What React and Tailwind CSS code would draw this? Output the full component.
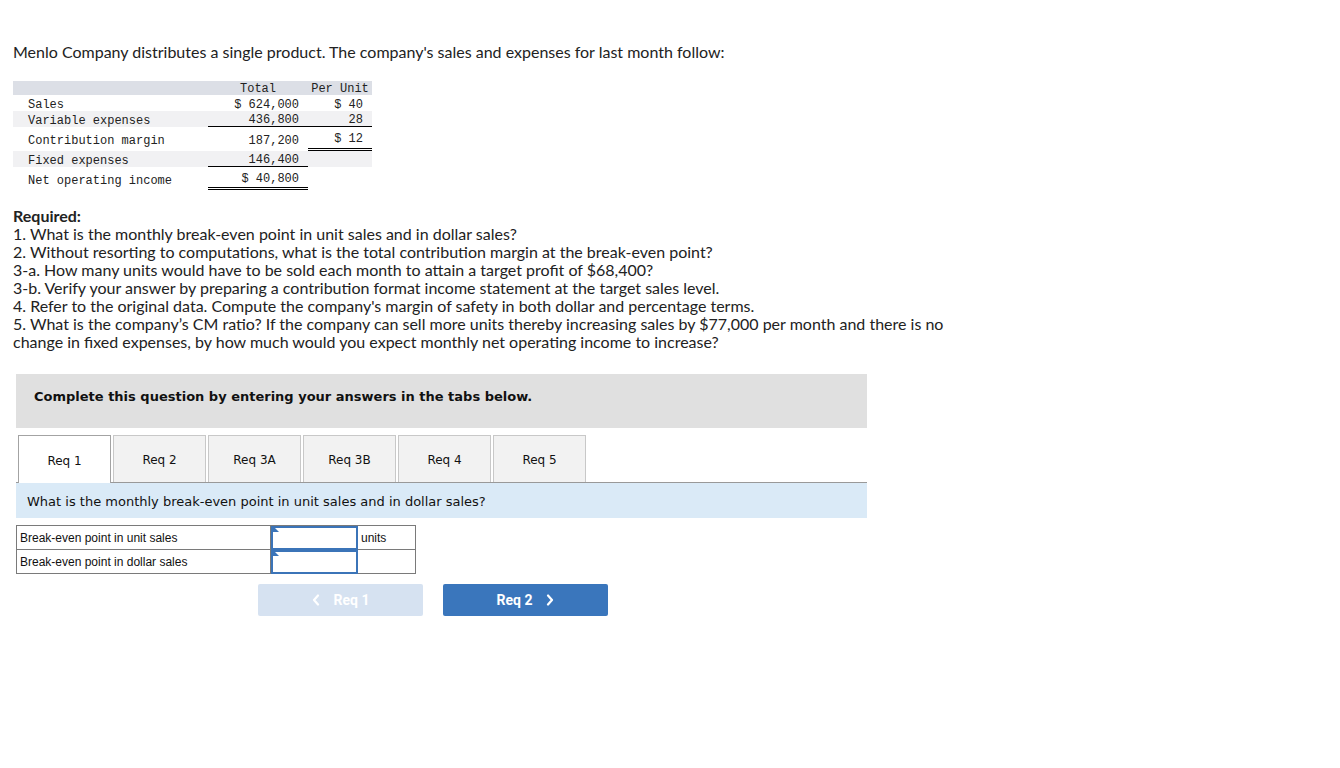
import React from "react";

const body = { fontFamily: "Lato, 'Open Sans', sans-serif" };
const mono = { fontFamily: "'Liberation Mono', 'DejaVu Sans Mono', monospace" };
const verdana = { fontFamily: "'DejaVu Sans', Verdana, sans-serif" };
const arial = { fontFamily: "'Liberation Sans', Arial, sans-serif" };

function IncomeTable() {
  return (
    <div className="w-[359px] text-[12px] text-[#222]" style={mono}>
      <div className="flex h-[14px] leading-[17px] bg-[#dcdfe6]">
        <div className="w-[195px]" />
        <div className="w-[100px] text-center">Total</div>
        <div className="w-[64px] text-center">Per Unit</div>
      </div>
      <div className="flex h-[16px] leading-[20px]">
        <div className="w-[195px] pl-[15px]">Sales</div>
        <div className="w-[100px] text-right pr-[9px]">$ 624,000</div>
        <div className="w-[64px] text-right pr-[9px]">$ 40</div>
      </div>
      <div className="flex h-[16px] leading-[20px] bg-[#f1f1f3]">
        <div className="w-[195px] pl-[15px]">Variable expenses</div>
        <div className="w-[100px] text-right pr-[9px] border-b border-black leading-[19px]">436,800</div>
        <div className="w-[64px] text-right pr-[9px] border-b border-black leading-[19px]">28</div>
      </div>
      <div className="flex h-[24px] leading-[28px]">
        <div className="w-[195px] pl-[15px]">Contribution margin</div>
        <div className="w-[100px] text-right pr-[9px]">187,200</div>
        <div className="w-[64px] text-right pr-[9px] border-b-[3px] border-double border-black leading-[25px]">$ 12</div>
      </div>
      <div className="flex h-[16px] leading-[20px] bg-[#f1f1f3]">
        <div className="w-[195px] pl-[15px]">Fixed expenses</div>
        <div className="w-[100px] text-right pr-[9px] border-b border-black leading-[19px]">146,400</div>
        <div className="w-[64px]" />
      </div>
      <div className="flex h-[23px] leading-[28px]">
        <div className="w-[195px] pl-[15px]">Net operating income</div>
        <div className="w-[100px] text-right pr-[9px] border-b-[3px] border-double border-black leading-[25px]">$ 40,800</div>
        <div className="w-[64px]" />
      </div>
    </div>
  );
}

function Chevron({ dir }) {
  return (
    <svg width="8" height="12" viewBox="0 0 8 12" fill="none">
      <path
        d={dir === "left" ? "M6 1.5 L2 6 L6 10.5" : "M2 1.5 L6 6 L2 10.5"}
        stroke="white"
        strokeWidth="2.2"
        strokeLinecap="round"
        strokeLinejoin="round"
      />
    </svg>
  );
}

function InputCell() {
  return (
    <div className="relative w-[87px] h-[24px] border-2 border-[#3b74b8] bg-white">
      <div className="absolute left-0 top-0 w-0 h-0 border-t-[6px] border-t-transparent border-l-[6px] border-l-[#3b74b8] -translate-y-[2px]" />
    </div>
  );
}

export default function App() {
  const tabs = ["Req 1", "Req 2", "Req 3A", "Req 3B", "Req 4", "Req 5"];
  return (
    <div className="w-[1340px] min-h-[768px] bg-white text-[#222]">
      <div className="pl-[13px] pt-[43px]" style={body}>
        <p className="text-[16px] leading-[18px]">
          Menlo Company distributes a single product. The company's sales and expenses for last month follow:
        </p>
      </div>

      <div className="pl-[13px] mt-[20px]">
        <IncomeTable />
      </div>

      <div className="pl-[13px] mt-[17px] text-[16px] leading-[18px]" style={body}>
        <p className="font-bold">Required:</p>
        <p>1. What is the monthly break-even point in unit sales and in dollar sales?</p>
        <p>2. Without resorting to computations, what is the total contribution margin at the break-even point?</p>
        <p>3-a. How many units would have to be sold each month to attain a target profit of $68,400?</p>
        <p>3-b. Verify your answer by preparing a contribution format income statement at the target sales level.</p>
        <p>4. Refer to the original data. Compute the company's margin of safety in both dollar and percentage terms.</p>
        <p>
          5. What is the company’s CM ratio? If the company can sell more units thereby increasing sales by $77,000 per month and there is no
          <br />
          change in fixed expenses, by how much would you expect monthly net operating income to increase?
        </p>
      </div>

      <div className="ml-[16px] w-[851px] mt-[23px]">
        <div className="h-[54px] bg-[#e0e0e0] pl-[18px] pt-[14px]">
          <p className="text-[13px] leading-[17px] font-bold text-[#111]" style={verdana}>
            Complete this question by entering your answers in the tabs below.
          </p>
        </div>

        <div className="mt-[7px] flex items-end border-b border-[#999] h-[48px]">
          <div className="w-[2px]" />
          {tabs.map((t, i) => (
            <div
              key={t}
              className={
                i === 0
                  ? "w-[93px] h-[48px] -mb-px bg-white border border-b-0 border-[#a3a3a3] flex items-center justify-center pt-[2px] text-[12px] text-[#111] mr-[2px]"
                  : "w-[93px] h-[47px] bg-[#f2f2f2] border border-b-0 border-[#c8c8c8] flex items-center justify-center pt-[2px] text-[12px] text-[#111] mr-[2px]"
              }
              style={verdana}
            >
              {t}
            </div>
          ))}
        </div>

        <div className="h-[35px] bg-[#daeaf7] flex items-center pl-[11px] pt-[2px]">
          <span className="text-[13px] text-[#111]" style={verdana}>
            What is the monthly break-even point in unit sales and in dollar sales?
          </span>
        </div>

        <div className="mt-[7px] w-[400px] border border-[#7a7a7a] text-[12px] text-[#111]" style={arial}>
          <div className="flex h-[24px] border-b border-[#7a7a7a]">
            <div className="w-[254px] pl-[3px] flex items-center border-r border-[#7a7a7a]">Break-even point in unit sales</div>
            <InputCell />
            <div className="flex-1 pl-[3px] flex items-center">units</div>
          </div>
          <div className="flex h-[23px]">
            <div className="w-[254px] pl-[3px] flex items-center border-r border-[#7a7a7a]">Break-even point in dollar sales</div>
            <InputCell />
            <div className="flex-1" />
          </div>
        </div>

        <div className="mt-[10px] flex gap-[20px] pl-[242px]" style={{ fontFamily: "Roboto, sans-serif" }}>
          <button className="w-[165px] h-[32px] rounded-[2px] bg-[#d6e2f1] text-white font-bold text-[14px] flex items-center justify-center gap-[14px]">
            <Chevron dir="left" />
            <span>Req 1</span>
          </button>
          <button className="w-[165px] h-[32px] rounded-[2px] bg-[#3a76bc] text-white font-bold text-[14px] flex items-center justify-center gap-[14px]">
            <span>Req 2</span>
            <Chevron dir="right" />
          </button>
        </div>
      </div>
    </div>
  );
}
